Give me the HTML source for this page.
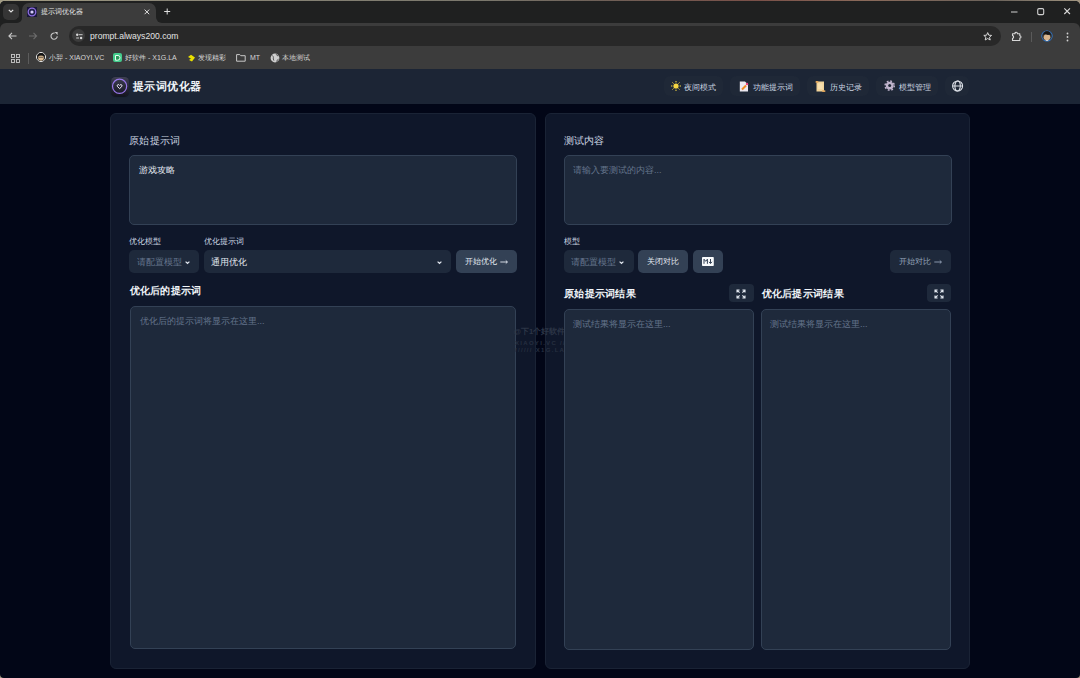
<!DOCTYPE html>
<html><head><meta charset="utf-8">
<style>
*{box-sizing:border-box;margin:0;padding:0}
html,body{width:1080px;height:678px;overflow:hidden;background:linear-gradient(90deg,#a29c84 0,#8c8878 15%,#7a776c 45%,#6e6158 55%,#7a5048 70%,#8a6a5a 80%,#6a625a 92%,#a09480 100%);font-family:"Liberation Sans",sans-serif}
.abs{position:absolute}
svg{position:absolute;overflow:visible}
#win{position:absolute;left:0;top:1px;width:1080px;height:677px;border-radius:5px 5px 4px 4px;overflow:hidden;background:#020617}
#tabbar{position:absolute;left:0;top:0;width:1080px;height:30px;background:#1f2020}
#toolbar{position:absolute;left:0;top:22px;width:1080px;height:24px;background:#3c3c3c;border-radius:6px 6px 0 0}
#bmbar{position:absolute;left:0;top:46px;width:1080px;height:22px;background:#3c3c3c}
.t{position:absolute;white-space:nowrap;line-height:1}
#hdr{position:absolute;left:0;top:68px;width:1080px;height:35px;background:#1c2535}
.nav{position:absolute;top:7px;height:20px;border-radius:6px;background:#1f2837}
.nav .t{font-size:7.6px;color:#cbd5e1;top:7.5px}
.card{position:absolute;top:112px;height:556px;background:#0f172a;border:1px solid #1a2335;border-radius:6px}
.box{position:absolute;background:#1e293b;border:1px solid #334155;border-radius:5px}
.sel{position:absolute;background:#1e293b;border-radius:5px}
.btn{position:absolute;background:#334155;border-radius:5px}
.lbl{font-size:9.9px;color:#cbd5e1;letter-spacing:0.25px}
.sm{font-size:8px;color:#cbd5e1}
.ph{font-size:9px;color:#64748b}
.bold{font-weight:bold;color:#f1f5f9;font-size:9.7px;letter-spacing:0.28px}
</style></head><body>
<div id="win">
  <div id="tabbar">
    <div class="abs" style="left:3px;top:3px;width:16px;height:16px;border-radius:5px;background:#353535"></div>
    <svg style="left:8px;top:8px" width="6" height="4"><path d="M0.8 0.8 L3 3 L5.2 0.8" stroke="#e0e0e0" stroke-width="1.2" fill="none"/></svg>
    <div class="abs" style="left:22px;top:2px;width:134px;height:21px;border-radius:7px 7px 0 0;background:#3c3c3c"></div>
    <div class="abs" style="left:17px;top:17px;width:5px;height:5px;background:#3c3c3c"></div><div class="abs" style="left:17px;top:17px;width:5px;height:5px;border-radius:0 0 5px 0;background:#1f2020"></div>
    <div class="abs" style="left:156px;top:16px;width:6px;height:6px;background:#3c3c3c"></div><div class="abs" style="left:156px;top:16px;width:6px;height:6px;border-radius:0 0 0 6px;background:#1f2020"></div>
    <div class="abs" style="left:27px;top:6px;width:10px;height:10px;background:#1a1838"></div>
    <svg style="left:27px;top:6px" width="10" height="10"><circle cx="5" cy="5" r="3.8" stroke="#8f6ee0" stroke-width="1.3" fill="#20204a"/><circle cx="5" cy="5" r="1.6" fill="#d8ccff"/></svg>
    <div class="t" style="left:41px;top:7.6px;font-size:6.9px;color:#e8e8e8">提示词优化器</div>
    <svg style="left:143.5px;top:7.6px" width="6" height="6"><path d="M0.6 0.6 L5.2 5.2 M5.2 0.6 L0.6 5.2" stroke="#e0e0e0" stroke-width="1"/></svg>
    <svg style="left:163.5px;top:7.2px" width="8" height="8"><path d="M3.2 0.5 V6.5 M0.2 3.5 H6.2" stroke="#e0e0e0" stroke-width="1"/></svg>
    <svg style="left:1011px;top:9.5px" width="7" height="2"><path d="M0 1 H6.5" stroke="#d0d0d0" stroke-width="1"/></svg>
    <svg style="left:1037px;top:7px" width="8" height="8"><rect x="0.7" y="0.6" width="6" height="6" rx="1.3" stroke="#d0d0d0" stroke-width="1.1" fill="none"/></svg>
    <svg style="left:1064px;top:7px" width="7" height="7"><path d="M0.3 0.3 L6 6 M6 0.3 L0.3 6" stroke="#d8d8d8" stroke-width="1.1"/></svg>
  </div>
  <div id="toolbar">
    <svg style="left:8px;top:9px" width="9" height="8"><path d="M8.5 4 H1 M4 0.8 L0.9 4 L4 7.2" stroke="#c8c8c8" stroke-width="1.1" fill="none"/></svg>
    <svg style="left:29px;top:9px" width="9" height="8"><path d="M0 4 H7.5 M4.5 0.8 L7.6 4 L4.5 7.2" stroke="#6c6c6c" stroke-width="1.1" fill="none"/></svg>
    <svg style="left:49.8px;top:9px" width="9" height="9"><path d="M4.6 1.1 A3.1 3.1 0 1 0 7.2 4.2" stroke="#c8c8c8" stroke-width="1.1" fill="none"/><path d="M4.5 0 L7.6 0 L7.6 3.1 Z" fill="#c8c8c8"/></svg>
    <div class="abs" style="left:69px;top:3.4px;width:932px;height:19.8px;border-radius:10px;background:#282828"></div>
    <div class="abs" style="left:71.7px;top:5.8px;width:13.6px;height:13.6px;border-radius:7px;background:#3c3c3c"></div>
    <svg style="left:74.5px;top:9.5px" width="9" height="8"><circle cx="2.2" cy="1.7" r="1.2" fill="#d8d8d8"/><path d="M3.8 1.7 H7.6 M1.2 5 H4" stroke="#d8d8d8" stroke-width="0.9"/><circle cx="6.1" cy="5" r="1.2" fill="#d8d8d8"/></svg>
    <div class="t" style="left:90px;top:9px;font-size:8.6px;color:#e3e3e3">prompt.always200.com</div>
    <svg style="left:982.5px;top:9px" width="10" height="10"><path d="M4.7 0.6 L5.8 3.2 L8.6 3.4 L6.5 5.2 L7.2 8 L4.7 6.5 L2.2 8 L2.9 5.2 L0.8 3.4 L3.6 3.2 Z" stroke="#d8d8d8" stroke-width="1" fill="none" stroke-linejoin="round"/></svg>
    <svg style="left:1011px;top:8px" width="11" height="11"><path d="M1.5 2.8 H4 V2.4 Q4 1.2 5.2 1.2 Q6.4 1.2 6.4 2.4 V2.8 H8.8 V4.8 Q10 4.8 10 5.9 Q10 7 8.8 7 V9.5 H1.5 V7.2 Q2.6 7.2 2.6 5.9 Q2.6 4.6 1.5 4.6 Z" stroke="#d8d8d8" stroke-width="1.1" fill="none" stroke-linejoin="round"/></svg>
    <div class="abs" style="left:1031px;top:9px;width:1px;height:10px;background:#5a5a5a"></div>
    <svg style="left:1041px;top:7px" width="12" height="12"><defs><clipPath id="av"><circle cx="6" cy="6" r="5"/></clipPath></defs><circle cx="6" cy="6" r="5.6" fill="#2a82ea"/><g clip-path="url(#av)"><rect x="0" y="0" width="12" height="12" fill="#3a3a3a"/><ellipse cx="6" cy="7.2" rx="3.3" ry="3" fill="#d8b48c"/><path d="M2 5 Q3 1 6 1.2 Q9.5 1.2 10 5.5 L8.5 4.5 L7 5 L4 4 Z" fill="#151515"/><rect x="4.5" y="10" width="3" height="2" fill="#e8e8e8"/></g></svg>
    <svg style="left:1066px;top:9px" width="3" height="11"><circle cx="1.5" cy="1.5" r="0.9" fill="#d0d0d0"/><circle cx="1.5" cy="5" r="0.9" fill="#d0d0d0"/><circle cx="1.5" cy="8.5" r="0.9" fill="#d0d0d0"/></svg>
  </div>
  <div id="bmbar">
    <svg style="left:11px;top:7px" width="9" height="9"><rect x="0.5" y="0.5" width="3" height="3" stroke="#c8c8c8" stroke-width="0.9" fill="none"/><rect x="5.5" y="0.5" width="3" height="3" stroke="#c8c8c8" stroke-width="0.9" fill="none"/><rect x="0.5" y="5.5" width="3" height="3" stroke="#c8c8c8" stroke-width="0.9" fill="none"/><rect x="5.5" y="5.5" width="3" height="3" stroke="#c8c8c8" stroke-width="0.9" fill="none"/></svg>
    <div class="abs" style="left:28px;top:6px;width:1px;height:11px;background:#5c5c5c"></div>
    <svg style="left:36px;top:5px" width="10" height="10"><defs><clipPath id="av2"><circle cx="5" cy="5" r="4"/></clipPath></defs><circle cx="5" cy="5" r="4.5" fill="none" stroke="#f0f0f0" stroke-width="1"/><g clip-path="url(#av2)"><rect width="10" height="10" fill="#2a2a2a"/><ellipse cx="5" cy="6" rx="2.8" ry="2.8" fill="#d9b88e"/><path d="M1.5 4.5 Q2 1 5 1 Q8 1 8.5 4.5 L7 3.6 L3 3.6 Z" fill="#111"/><path d="M2.8 5.3 H7.2" stroke="#333" stroke-width="0.7"/></g></svg>
    <div class="t" style="left:49px;top:7px;font-size:7px;color:#d6d6d6">小羿 - XIAOYI.VC</div>
    <div class="abs" style="left:113px;top:5.5px;width:9px;height:9.5px;border-radius:2px;background:#43cc8c"></div>
    <svg style="left:113px;top:5.5px" width="9" height="10"><path d="M2.5 2.5 H5 Q7 2.5 7 4.8 Q7 7.2 4.5 7.2 L2.5 7.2 Z" stroke="#e8fff2" stroke-width="1" fill="#2a9a5a"/></svg>
    <div class="t" style="left:125px;top:7px;font-size:7px;color:#d6d6d6">好软件 - X1G.LA</div>
    <svg style="left:187px;top:7px" width="9" height="8"><path d="M1 3 L4 0.8 L8 3.5 L5 7.5 L2 6 L4 4.5 Z" fill="#e8e000"/></svg>
    <div class="t" style="left:198px;top:7px;font-size:7px;color:#d6d6d6">发现精彩</div>
    <svg style="left:236px;top:6.5px" width="10" height="9"><path d="M0.6 0.6 H3.8 L4.8 1.7 H9.2 V7.2 H0.6 Z" stroke="#c8c8c8" stroke-width="1" fill="none" stroke-linejoin="round"/></svg>
    <div class="t" style="left:250px;top:7px;font-size:7px;color:#d6d6d6">MT</div>
    <svg style="left:270px;top:5.5px" width="10" height="10"><circle cx="5" cy="5" r="4.4" fill="#cfcfcf"/><path d="M2.3 2.6 Q3.6 3.2 3.4 4.6 Q3 5.8 3.9 7.6 M6.2 1.2 Q6.6 2.6 8.2 3 M6.8 8.8 Q6.6 6.8 8.6 6.2" stroke="#4a4a4a" stroke-width="0.9" fill="none"/></svg>
    <div class="t" style="left:282px;top:7px;font-size:7px;color:#d6d6d6">本地测试</div>
  </div>
  <div id="hdr">
    <div class="abs" style="left:111px;top:8px;width:18px;height:18.5px;border-radius:4.5px;background:linear-gradient(#3d3f52,#15151f);box-shadow:0 0.5px 1px rgba(0,0,0,.4)"></div>
    <svg style="left:111px;top:8px" width="18" height="18"><circle cx="8.6" cy="9.3" r="7.1" stroke="#9877ea" stroke-width="1.2" fill="none"/><path d="M8.6 11.6 L6.5 9.6 Q5.9 8.7 6.5 7.9 Q7.2 7.3 8 7.8 L8.6 8.4 L9.2 7.8 Q10 7.3 10.7 7.9 Q11.3 8.7 10.7 9.6 Z" stroke="#f3ecff" stroke-width="1" fill="none" stroke-linejoin="round"/></svg>
    <div class="t" style="left:133px;top:12px;font-size:11.4px;letter-spacing:0.4px;font-weight:bold;color:#f1f5f9">提示词优化器</div>
    <div class="nav" style="left:664px;width:59px">
      <svg style="left:7px;top:5px" width="10" height="10"><circle cx="5" cy="5" r="2.6" fill="#f6d642"/><path d="M5 0 V1.4 M5 8.6 V10 M0 5 H1.4 M8.6 5 H10 M1.5 1.5 L2.5 2.5 M7.5 7.5 L8.5 8.5 M8.5 1.5 L7.5 2.5 M1.5 8.5 L2.5 7.5" stroke="#f6d642" stroke-width="1"/></svg>
      <div class="t" style="left:20px">夜间模式</div>
    </div>
    <div class="nav" style="left:730px;width:70px">
      <svg style="left:9px;top:4.5px" width="10" height="11"><path d="M0.8 0.5 H6 L9 3.5 V10.5 H0.8 Z" fill="#ece8f0"/><path d="M3 8.5 L7 4.5" stroke="#f08a24" stroke-width="2"/><circle cx="8" cy="3" r="1.2" fill="#e8407a"/></svg>
      <div class="t" style="left:23px">功能提示词</div>
    </div>
    <div class="nav" style="left:807px;width:62px">
      <svg style="left:8px;top:4.5px" width="11" height="11"><rect x="1.5" y="0.5" width="7.5" height="10" fill="#f2d49a"/><rect x="3" y="2.5" width="4.5" height="5.5" fill="#f7dfae"/><rect x="0.5" y="0" width="3" height="1.8" rx="0.9" fill="#e0a55a"/><rect x="7" y="9.2" width="3.5" height="1.8" rx="0.9" fill="#e0a55a"/></svg>
      <div class="t" style="left:23px">历史记录</div>
    </div>
    <div class="nav" style="left:876px;width:62px">
      <svg style="left:0;top:0" width="24" height="20"><circle cx="13.7" cy="9.6" r="3.9" fill="#bfb3cc"/><circle cx="13.7" cy="9.6" r="4.6" fill="none" stroke="#bfb3cc" stroke-width="1.5" stroke-dasharray="1.8 1.81"/><circle cx="13.7" cy="9.6" r="1.5" fill="#1f2837"/></svg>
      <div class="t" style="left:23px">模型管理</div>
    </div>
    <div class="nav" style="left:945px;width:24px">
      <svg style="left:0;top:0" width="24" height="20"><circle cx="12.6" cy="10" r="5" stroke="#dfe3ea" stroke-width="1.1" fill="none"/><ellipse cx="12.6" cy="10" rx="2.7" ry="5" stroke="#dfe3ea" stroke-width="1.1" fill="none"/><path d="M7.6 10 H17.6" stroke="#dfe3ea" stroke-width="1.1"/></svg>
    </div>
  </div>

  <!-- left card -->
  <div class="card" style="left:110px;width:426px"></div>
  <div class="t lbl" style="left:129px;top:134.5px">原始提示词</div>
  <div class="box" style="left:129px;top:154px;width:388px;height:70px"></div>
  <div class="t" style="left:138.5px;top:165px;font-size:8.8px;color:#e2e8f0">游戏攻略</div>
  <div class="t sm" style="left:129px;top:236.5px">优化模型</div>
  <div class="t sm" style="left:203.5px;top:236.5px">优化提示词</div>
  <div class="sel" style="left:129px;top:249px;width:70px;height:23px"></div>
  <div class="t ph" style="left:136.5px;top:257px">请配置模型</div>
  <svg style="left:185px;top:259.5px" width="5" height="3"><path d="M0.6 0.6 L2.5 2.4 L4.4 0.6" stroke="#e2e8f0" stroke-width="1.25" fill="none"/></svg>
  <div class="sel" style="left:203.5px;top:249px;width:247.5px;height:23px"></div>
  <div class="t" style="left:210.5px;top:257px;font-size:8.8px;color:#e2e8f0">通用优化</div>
  <svg style="left:437px;top:259.5px" width="5" height="3"><path d="M0.6 0.6 L2.5 2.4 L4.4 0.6" stroke="#e2e8f0" stroke-width="1.25" fill="none"/></svg>
  <div class="btn" style="left:456px;top:249px;width:61px;height:23px"></div>
  <div class="t sm" style="left:465px;top:257px;color:#e2e8f0">开始优化</div><svg style="left:499.8px;top:258px" width="9" height="6"><path d="M0.3 3 H7.4 M5.8 1.5 L7.4 3 L5.8 4.5" stroke="#e2e8f0" stroke-width="0.9" fill="none"/></svg>
  <div class="t bold" style="left:129.6px;top:284.5px">优化后的提示词</div>
  <div class="box" style="left:130px;top:305px;width:386px;height:343px"></div>
  <div class="t ph" style="left:140px;top:315.5px">优化后的提示词将显示在这里...</div>

  <!-- right card -->
  <div class="card" style="left:545px;width:425px"></div>
  <!-- watermark -->
  <div class="t" style="left:513.5px;top:327px;font-size:7.6px;font-weight:bold;color:#2c3546">@下1个好软件</div>
  <div class="t" style="left:515px;top:338.5px;font-size:6px;color:#262f40;letter-spacing:1.3px;font-weight:bold">XIAOYI.VC //</div>
  <div class="t" style="left:515px;top:346px;font-size:6px;color:#262f40;letter-spacing:1.3px;font-weight:bold">////// X1G.LA</div>
  <div class="t lbl" style="left:563.5px;top:134.5px">测试内容</div>
  <div class="box" style="left:563.5px;top:154px;width:388px;height:70px"></div>
  <div class="t ph" style="left:573px;top:164.5px">请输入要测试的内容...</div>
  <div class="t sm" style="left:563.5px;top:236.5px">模型</div>
  <div class="sel" style="left:563.5px;top:249px;width:70px;height:23px"></div>
  <div class="t ph" style="left:571px;top:257px">请配置模型</div>
  <svg style="left:619px;top:259.5px" width="5" height="3"><path d="M0.6 0.6 L2.5 2.4 L4.4 0.6" stroke="#e2e8f0" stroke-width="1.25" fill="none"/></svg>
  <div class="btn" style="left:638px;top:249px;width:50px;height:23px"></div>
  <div class="t sm" style="left:647px;top:257px;color:#e2e8f0">关闭对比</div>
  <div class="btn" style="left:693px;top:249px;width:29.5px;height:23px"></div>
  <svg style="left:701.9px;top:256px" width="12" height="9"><rect x="0" y="0" width="11.8" height="9" rx="0.8" fill="#f8fafc"/><path d="M2 6.8 V2.2 L3.7 4.3 L5.4 2.2 V6.8" stroke="#334155" stroke-width="1" fill="none"/><path d="M8.5 2 V6 M7 4.8 L8.5 6.6 L10 4.8" stroke="#334155" stroke-width="1" fill="none"/></svg>
  <div class="sel" style="left:890px;top:249px;width:61px;height:23px"></div>
  <div class="t sm" style="left:899px;top:257px;color:#94a3b8">开始对比</div><svg style="left:934px;top:257.5px" width="9" height="6"><path d="M0.3 3 H7.4 M5.8 1.5 L7.4 3 L5.8 4.5" stroke="#94a3b8" stroke-width="0.9" fill="none"/></svg>

  <div class="t bold" style="left:564px;top:288px">原始提示词结果</div>
  <div class="sel" style="left:729px;top:283px;width:24.8px;height:18px;border-radius:4px"></div>
  <svg style="left:736px;top:288px" width="10" height="10"><path d="M1 3.6 V1 H3.6 M1 1 L3.6 3.6 M6.4 1 H9 V3.6 M9 1 L6.4 3.6 M1 6.4 V9 H3.6 M1 9 L3.6 6.4 M6.4 9 H9 V6.4 M9 9 L6.4 6.4" stroke="#e2e8f0" stroke-width="1.1" fill="none"/></svg>
  <div class="box" style="left:563.5px;top:308px;width:190px;height:341px"></div>
  <div class="t ph" style="left:573px;top:319px">测试结果将显示在这里...</div>

  <div class="t bold" style="left:761.6px;top:288px">优化后提示词结果</div>
  <div class="sel" style="left:926.5px;top:283px;width:24.8px;height:18px;border-radius:4px"></div>
  <svg style="left:934px;top:288px" width="10" height="10"><path d="M1 3.6 V1 H3.6 M1 1 L3.6 3.6 M6.4 1 H9 V3.6 M9 1 L6.4 3.6 M1 6.4 V9 H3.6 M1 9 L3.6 6.4 M6.4 9 H9 V6.4 M9 9 L6.4 6.4" stroke="#e2e8f0" stroke-width="1.1" fill="none"/></svg>
  <div class="box" style="left:761px;top:308px;width:190px;height:341px"></div>
  <div class="t ph" style="left:770px;top:319px">测试结果将显示在这里...</div>

</div>
</body></html>
